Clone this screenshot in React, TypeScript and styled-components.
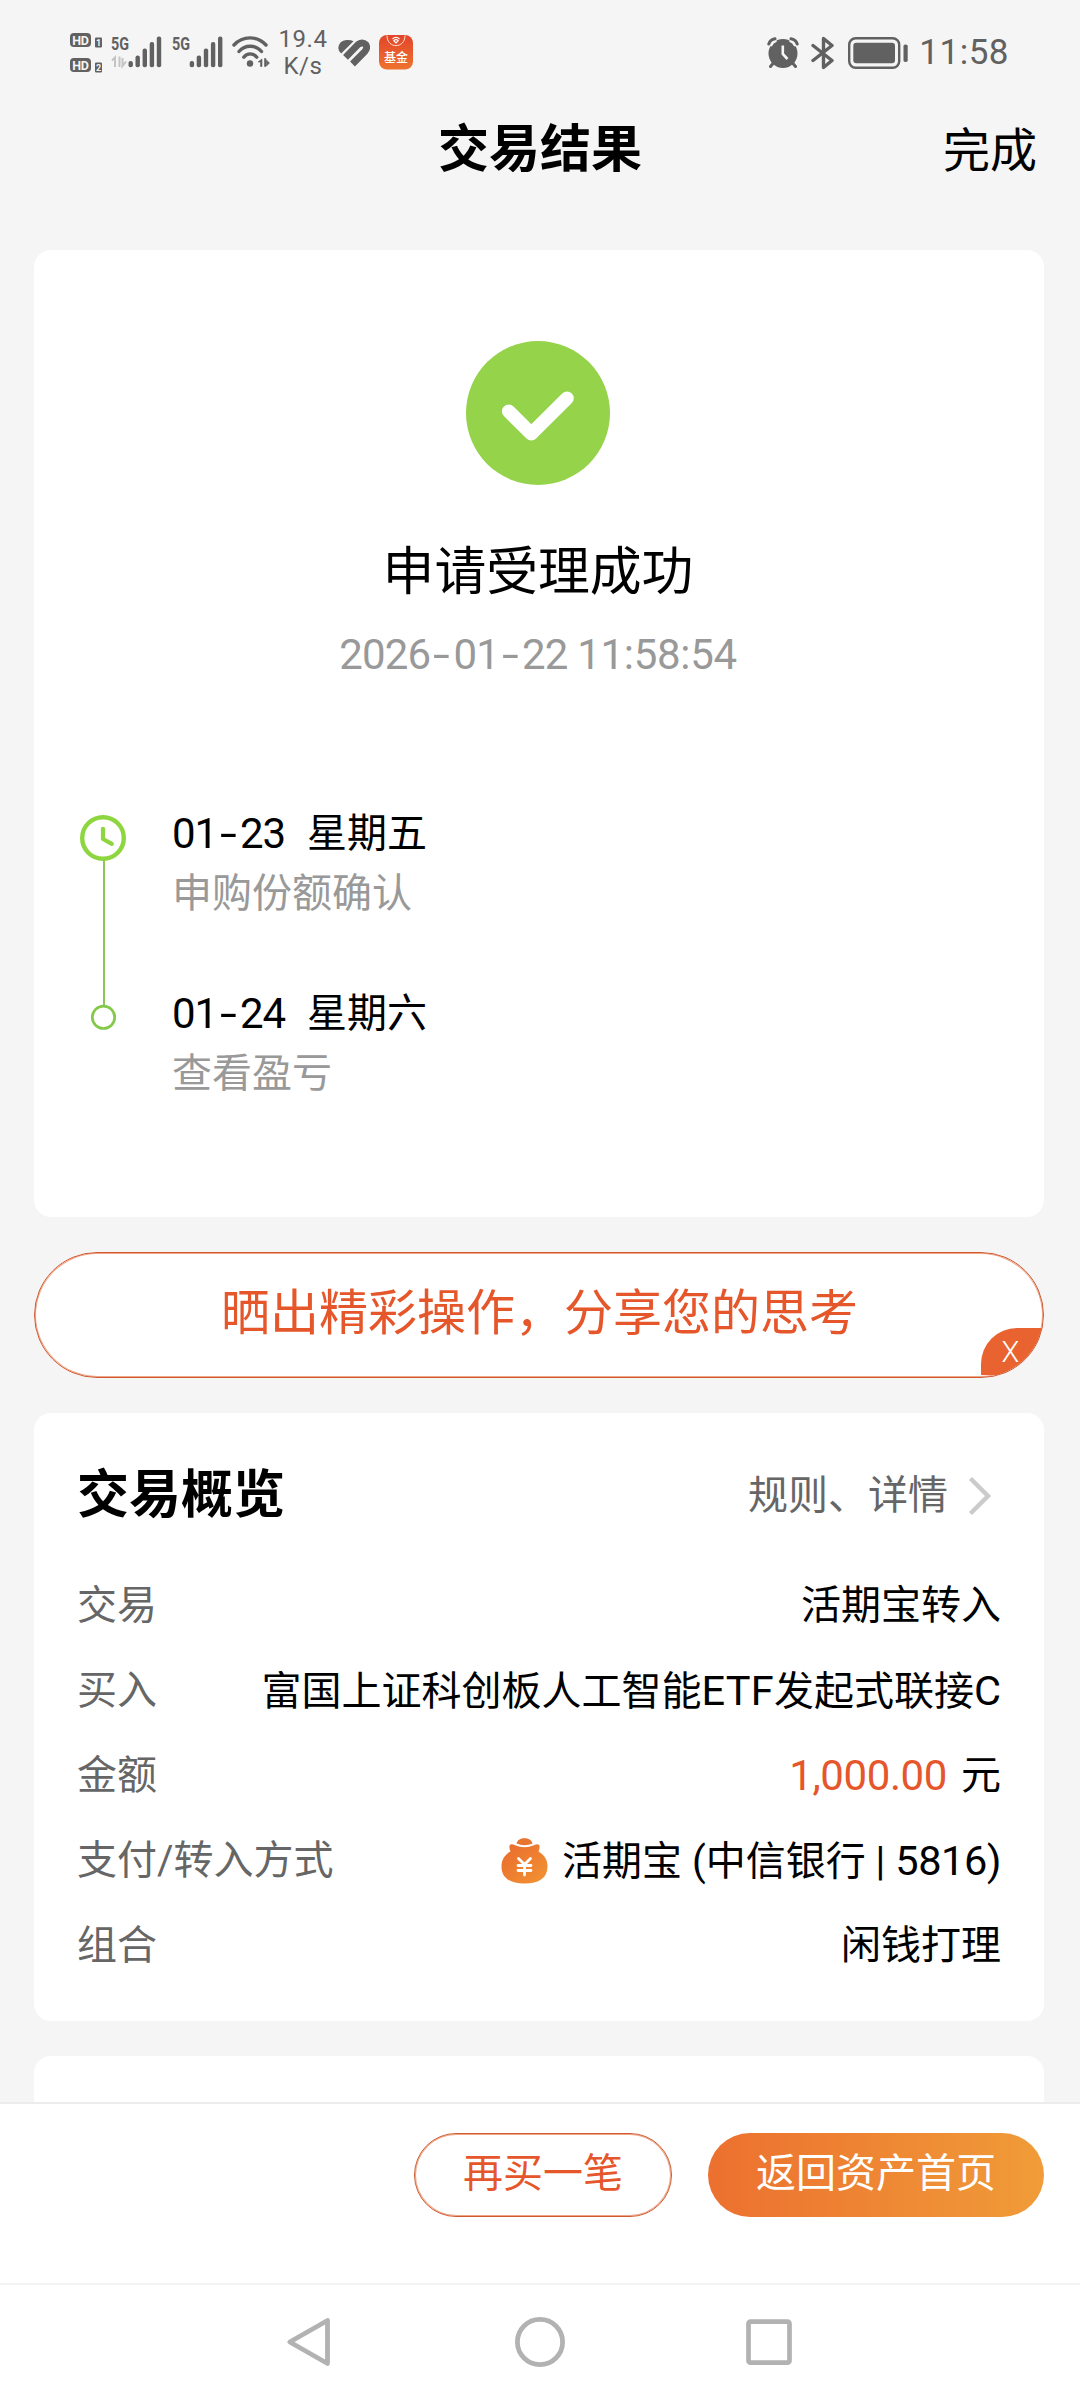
import React from "react";
import styled, { createGlobalStyle } from "styled-components";

const GlobalStyle = createGlobalStyle`
  *, *::before, *::after { box-sizing: border-box; }
  body {
    margin: 0;
    background: #f5f5f5;
    font-family: Roboto, "Noto Sans CJK SC", sans-serif;
    color: #000;
  }
  svg { display: block; flex: none; }
`;

const Screen = styled.div`
  width: 1080px;
  height: 2400px;
  display: flex;
  flex-direction: column;
  overflow: hidden;
  background: #f5f5f5;
`;

/* ---------- status bar ---------- */

const StatusBar = styled.header`
  height: 104px;
  flex: none;
  padding: 0 71px 0 70px;
  display: flex;
  align-items: center;
  justify-content: space-between;
  color: #616161;
`;

const StatusGroup = styled.div`
  display: flex;
  align-items: center;
  height: 104px;
  padding-top: 1px;
`;

const NetSpeed = styled.div`
  width: 48px;
  margin: 0 11px 0 8px;
  display: flex;
  flex-direction: column;
  align-items: center;
  font-size: 24px;
  line-height: 27px;
  letter-spacing: 0.5px;
  white-space: nowrap;
`;

const Clock = styled.time`
  margin-left: 11px;
  font-size: 35px;
  line-height: 40px;
  letter-spacing: 0.5px;
`;

/* ---------- title bar ---------- */

const TitleBar = styled.div`
  height: 146px;
  flex: none;
  padding: 0 43px 54px;
  display: grid;
  grid-template-columns: 1fr auto 1fr;
  align-items: center;
`;

const PageTitle = styled.h1`
  grid-column: 2;
  margin: 0;
  font-size: 51px;
  line-height: 60px;
  font-weight: 700;
`;

const DoneButton = styled.button`
  justify-self: end;
  padding: 2px 0 0;
  border: 0;
  background: none;
  color: inherit;
  font: inherit;
  font-size: 47px;
  line-height: 60px;
`;

/* ---------- content ---------- */

const Content = styled.main`
  flex: none;
  height: 1852px;
  padding: 0 36px 0 34px;
  display: flex;
  flex-direction: column;
  gap: 35px;
  overflow: hidden;
`;

const Card = styled.section<{ $height: number }>`
  height: ${(p) => p.$height}px;
  flex: none;
  border-radius: 17px;
  background: #fff;
`;

const ResultHead = styled.div`
  padding: 91px 2px 0 0;
  display: flex;
  flex-direction: column;
  align-items: center;
`;

const ResultTitle = styled.h2`
  margin: 53px 0 0;
  font-size: 51.8px;
  line-height: 70px;
  font-weight: 400;
`;

const ResultTime = styled.p`
  margin: 22px 0 0;
  font-size: 42px;
  line-height: 50px;
  letter-spacing: -0.8px;
  color: #999;
  white-space: nowrap;
`;

const TimeOfDay = styled.span`
  letter-spacing: -0.3px;
`;

const DashBox = styled.span`
  display: inline-block;
  width: 23px;
  text-align: center;
  letter-spacing: 0;
  transform: scaleX(1.45);
`;

const Timeline = styled.div`
  display: flex;
  margin-top: 124px;
  padding-left: 45px;
  gap: 43px;
`;

const Steps = styled.ol`
  list-style: none;
  margin: 0;
  padding: 0;
`;

const Step = styled.li`
  height: 180px;
`;

const StepDate = styled.div`
  display: flex;
  gap: 22px;
  font-size: 40px;
  line-height: 60px;
`;

const StepDay = styled.span`
  width: 113px;
  font-size: 42px;
  letter-spacing: -1.1px;
  white-space: nowrap;
`;

const StepNote = styled.div`
  font-size: 40px;
  line-height: 60px;
  color: #999;
`;

const ShareBanner = styled.div`
  position: relative;
  height: 126px;
  flex: none;
  overflow: hidden;
  display: flex;
  justify-content: center;
  padding: 27px 0 0 1px;
  border: 1px solid #cf5a30;
  box-shadow: inset 0 0 0 1px #f0a587;
  border-radius: 63px;
  background: #fff;
  color: #e6562b;
  font-size: 49px;
  line-height: 68px;
`;

const CloseCorner = styled.button`
  position: absolute;
  right: 1px;
  bottom: 2px;
  width: 61px;
  height: 47px;
  padding: 0 2px 0 0;
  border: 0;
  border-radius: 36px 0 0 0;
  background: #e8632f;
  color: #fff;
  font: 300 29px/46px Roboto, sans-serif;
`;

const OverviewHead = styled.div`
  height: 151px;
  padding: 27px 52px 13px 43px;
  display: flex;
  align-items: center;
  justify-content: space-between;
`;

const OverviewTitle = styled.h2`
  margin: 0;
  font-size: 52px;
  line-height: 60px;
  font-weight: 700;
`;

const DetailLink = styled.a`
  display: flex;
  align-items: center;
  gap: 20px;
  font-size: 40px;
  line-height: 60px;
  color: #666;
`;

const Row = styled.div`
  height: 85px;
  padding: 0 43px 1px;
  display: flex;
  align-items: center;
  justify-content: space-between;
  font-size: 40px;
  line-height: 60px;
`;

const Label = styled.span`
  color: #666;
`;

const Value = styled.span`
  display: flex;
  align-items: center;
  gap: 14px;
  white-space: pre;
`;

const Latin = styled.span<{ $spacing?: number }>`
  font-size: 41.5px;
  letter-spacing: ${(p) => p.$spacing ?? 0}px;
`;

const Amount = styled.span`
  font-size: 42px;
  letter-spacing: -0.4px;
  color: #e6562b;
`;

/* ---------- bottom bars ---------- */

const ActionBar = styled.footer`
  height: 181px;
  flex: none;
  padding: 29px 36px 0;
  display: flex;
  justify-content: flex-end;
  align-items: flex-start;
  gap: 36px;
  border-top: 2px solid #ececec;
  background: #fff;
`;

const ActionButton = styled.button<{ $primary?: boolean; $width: number }>`
  width: ${(p) => p.$width}px;
  height: 84px;
  padding: 0 0 2px;
  border: ${(p) => (p.$primary ? "0" : "1px solid #cf5a30")};
  box-shadow: ${(p) => (p.$primary ? "none" : "inset 0 0 0 1px #f0a587")};
  border-radius: 42px;
  background: ${(p) => (p.$primary ? "linear-gradient(90deg, #ec702f, #f09c38)" : "#fff")};
  color: ${(p) => (p.$primary ? "#fff" : "#e6562b")};
  font: inherit;
  font-size: 40px;
  line-height: 60px;
`;

const NavBar = styled.nav`
  height: 117px;
  flex: none;
  padding: 0 287px 2px 285px;
  display: flex;
  align-items: center;
  justify-content: space-between;
  border-top: 2px solid #f3f3f3;
  background: #fff;
`;

/* ---------- drawings ---------- */

const SignalIcons = () => (
  <svg width="201" height="50" viewBox="70 28 201 50">
    <rect x="70" y="33" width="21" height="14" rx="4" fill="#616161" />
    <rect x="70" y="58" width="21" height="14" rx="4" fill="#616161" />
    <g fill="#f5f5f5" fontFamily="Roboto, sans-serif" fontWeight="700">
      <text x="72.3" y="44.6" fontSize="12.5" textLength="16.5">HD</text>
      <text x="72.3" y="69.6" fontSize="12.5" textLength="16.5">HD</text>
    </g>
    <rect x="95" y="37.5" width="7" height="10" rx="1" fill="#616161" />
    <rect x="95" y="62.5" width="7" height="10" rx="1" fill="#616161" />
    <g fill="#f5f5f5" fontFamily="Roboto, sans-serif" fontWeight="700" fontSize="9">
      <text x="96" y="45.8">1</text>
      <text x="96" y="70.8">2</text>
    </g>
    <g fill="#616161" fontFamily="Roboto, sans-serif" fontWeight="700" fontSize="18.5">
      <text x="111" y="50" textLength="18" lengthAdjust="spacingAndGlyphs">5G</text>
      <text x="172" y="50" textLength="18" lengthAdjust="spacingAndGlyphs">5G</text>
    </g>
    <path d="M112 60.5 115 57.5V67M119.5 56.5V67M122.5 58V66L126 61.5" fill="none" stroke="#c4c4c4" strokeWidth="2" />
    {[128.5, 189.7].map((x) => (
      <g key={x} fill="#616161">
        <rect x={x} y="61" width="4.4" height="6.3" rx="2" />
        <rect x={x + 7} y="55.5" width="4.4" height="11.8" rx="2" />
        <rect x={x + 14.1} y="48.5" width="4.4" height="18.8" rx="2" />
        <rect x={x + 21.2} y="42" width="4.4" height="25.3" rx="2" />
        <rect x={x + 28.3} y="36.5" width="4.4" height="30.8" rx="2" />
      </g>
    ))}
    <g fill="none" stroke="#616161" strokeWidth="3.4" strokeLinecap="round">
      <path d="M234 45C242.5 35.5 257.5 35.5 266 45" />
      <path d="M239 51.5C245 44.5 255.5 44.5 261.5 51.5" />
      <path d="M243.8 57.2C247 52.8 253.5 52.8 256.8 57.2" />
    </g>
    <circle cx="250" cy="63.5" r="3.2" fill="#616161" />
    <path d="M258 62 262 59V66.5H260.5V62ZM264.5 58.5H266V66.5H264.5ZM266.5 60 269.5 63 266.5 66Z" fill="#616161" stroke="#616161" strokeWidth=".6" />
  </svg>
);

const HealthIcon = () => (
  <svg width="32" height="28" viewBox="337 38 32 28">
    <path d="M340.2 52.4Q337.3 50 337.3 47Q338 39.7 345.5 39Q350 38.8 352.5 40.2Z" fill="#616161" />
    <path d="M344.5 56.3 357 43.6Q361.5 40.3 364.7 43.4Q367 47 363.7 50.7L351.5 63" fill="none" stroke="#616161" strokeWidth="6.8" />
  </svg>
);

const FundIcon = () => (
  <svg width="34" height="35" viewBox="0 0 34 35">
    <defs>
      <linearGradient id="fund" x1="0" y1="0" x2="0" y2="1">
        <stop offset="0" stopColor="#e2452a" />
        <stop offset="1" stopColor="#ee732e" />
      </linearGradient>
    </defs>
    <rect width="34" height="34.5" rx="8" fill="url(#fund)" />
    <path d="M8 .5C8 14 26 14 26 .5" fill="none" stroke="#ffe3cf" strokeWidth="1" />
    <path d="M13.5 4Q17 .8 20.5 4M14.8 5.7Q17 3.6 19.2 5.7L17 8Z" fill="none" stroke="#fff" strokeWidth="1.1" />
    <text x="5" y="26.5" fontSize="12" fontWeight="500" fill="#fff" fontFamily="Noto Sans CJK SC, sans-serif">基金</text>
  </svg>
);

const AlarmIcon = () => (
  <svg width="32" height="32" viewBox="0 0 32 32">
    <circle cx="16" cy="16.5" r="14.5" fill="#616161" />
    <path d="M2.5 8.5Q4.5 4 9 2.5M29.5 8.5Q27.5 4 23 2.5" fill="none" stroke="#f5f5f5" strokeWidth="5" />
    <path d="M1.8 7Q3.3 2.5 8 1.8M30.2 7Q28.7 2.5 24 1.8M6 26.5 3.5 29.5M26 26.5 28.5 29.5" fill="none" stroke="#616161" strokeWidth="3" strokeLinecap="round" />
    <path d="M15.8 8.5V17L20.5 22" fill="none" stroke="#f5f5f5" strokeWidth="2.6" />
  </svg>
);

const BluetoothIcon = () => (
  <svg width="24" height="34" viewBox="0 0 24 34">
    <path d="M2 9.5 21 24.5 12.5 31.5V2.5L21 9.5 2 24.5" fill="none" stroke="#616161" strokeWidth="3.4" strokeLinejoin="round" strokeLinecap="round" />
  </svg>
);

const BatteryIcon = () => (
  <svg width="60" height="32" viewBox="0 0 60 32">
    <rect x="1.2" y="1.2" width="50" height="29.6" rx="6.5" fill="none" stroke="#616161" strokeWidth="2.4" />
    <rect x="5.3" y="5.7" width="41.7" height="20.6" rx="3" fill="#616161" />
    <rect x="55.5" y="7.5" width="4.2" height="17.5" rx="1.8" fill="#616161" />
  </svg>
);

const SuccessIcon = () => (
  <svg width="144" height="144" viewBox="0 0 144 144">
    <circle cx="72" cy="72" r="72" fill="#94d34a" />
    <path d="M42.7 70.3 65.3 92.8 101 57.2" fill="none" stroke="#fff" strokeWidth="13.6" strokeLinecap="round" strokeLinejoin="round" />
  </svg>
);

const RailBox = styled.div`
  padding-top: 10px;
`;

const TimelineRail = () => (
  <svg width="50" height="220" viewBox="0 0 50 220">
    <path d="M25 46V191" stroke="#8cc653" strokeWidth="2" />
    <circle cx="24" cy="24" r="20.8" fill="#fff" stroke="#8ed63f" strokeWidth="4.4" />
    <path d="M24 14.8V25L32.8 29.8" fill="none" stroke="#8ed63f" strokeWidth="4.2" strokeLinecap="round" strokeLinejoin="round" />
    <circle cx="24.5" cy="203.3" r="11.2" fill="#fff" stroke="#84c94a" strokeWidth="2.7" />
  </svg>
);

const ChevronIcon = () => (
  <svg width="24" height="40" viewBox="0 0 24 40">
    <path d="M2.5 2.5 20 20 2.5 37.5" fill="none" stroke="#cbcbcb" strokeWidth="4.4" />
  </svg>
);

const MoneyBagIcon = () => (
  <svg width="47" height="46" viewBox="0 0 47 46">
    <defs>
      <linearGradient id="bag" x1="0" y1="0" x2="1" y2="1">
        <stop offset="0" stopColor="#e96a2e" />
        <stop offset="1" stopColor="#f29433" />
      </linearGradient>
    </defs>
    <path d="M15.5 5.5C17 -1.5 30 -1.5 31.5 5.5Q23.5 8.8 15.5 5.5Z" fill="#e9742f" />
    <path d="M9 6.8Q11 5.5 14 7.3Q23.5 11 33 7.3Q36 5.5 38 6.8Q39.5 9 37.5 13.5C43.5 17 46.5 22 46.5 28.5C46.5 40 38 45.5 23.5 45.5S.5 40 .5 28.5C.5 22 3.5 17 9.5 13.5Q7.5 9 9 6.8Z" fill="url(#bag)" />
    <path d="M17.5 20.5 23.5 26.5 29.5 20.5M23.5 26.5V37M17 27.5H30M17 32.5H30" fill="none" stroke="#fff" strokeWidth="2.8" strokeLinecap="round" />
  </svg>
);

const BackIcon = () => (
  <svg width="49" height="52" viewBox="0 0 49 52">
    <path d="M42.5 4.5V47.5L4.8 26Z" fill="none" stroke="#b2b2b2" strokeWidth="4.8" strokeLinejoin="round" />
  </svg>
);

const HomeIcon = () => (
  <svg width="50" height="50" viewBox="0 0 50 50">
    <circle cx="25" cy="25" r="22.6" fill="none" stroke="#b2b2b2" strokeWidth="4.8" />
  </svg>
);

const RecentsIcon = () => (
  <svg width="47" height="46" viewBox="0 0 47 46">
    <rect x="2.5" y="2.7" width="41" height="41" rx="2" fill="none" stroke="#b2b2b2" strokeWidth="4.7" />
  </svg>
);

const Spacer = styled.span<{ $w: number }>`
  width: ${(p) => p.$w}px;
  flex: none;
`;

const Dash = () => <DashBox>-</DashBox>;

const steps = [
  { month: "01", day: "23", week: "星期五", note: "申购份额确认" },
  { month: "01", day: "24", week: "星期六", note: "查看盈亏" },
];

const rows: { label: string; value: React.ReactNode }[] = [
  { label: "交易", value: "活期宝转入" },
  {
    label: "买入",
    value: (
      <span>
        富国上证科创板人工智能<Latin $spacing={0.3}>ETF</Latin>发起式联接<Latin>C</Latin>
      </span>
    ),
  },
  { label: "金额", value: <><Amount>1,000.00</Amount><span>元</span></> },
  {
    label: "支付/转入方式",
    value: (
      <>
        <MoneyBagIcon />
        <span>活期宝 (中信银行 | <Latin $spacing={-0.4}>5816)</Latin></span>
      </>
    ),
  },
  { label: "组合", value: "闲钱打理" },
];

export default function App() {
  return (
    <Screen>
      <GlobalStyle />
      <StatusBar>
        <StatusGroup>
          <SignalIcons />
          <NetSpeed>
            <span>19.4</span>
            <span>K/s</span>
          </NetSpeed>
          <HealthIcon />
          <Spacer $w={9} />
          <FundIcon />
        </StatusGroup>
        <StatusGroup>
          <AlarmIcon />
          <Spacer $w={12} />
          <BluetoothIcon />
          <Spacer $w={13} />
          <BatteryIcon />
          <Clock>11:58</Clock>
        </StatusGroup>
      </StatusBar>

      <TitleBar>
        <PageTitle>交易结果</PageTitle>
        <DoneButton>完成</DoneButton>
      </TitleBar>

      <Content>
        <Card $height={967}>
          <ResultHead>
            <SuccessIcon />
            <ResultTitle>申请受理成功</ResultTitle>
            <ResultTime>
              2026<Dash />01<Dash />22 <TimeOfDay>11:58:54</TimeOfDay>
            </ResultTime>
          </ResultHead>
          <Timeline>
            <RailBox>
              <TimelineRail />
            </RailBox>
            <Steps>
              {steps.map((s) => (
                <Step key={s.day}>
                  <StepDate>
                    <StepDay>{s.month}<Dash />{s.day}</StepDay>
                    <span>{s.week}</span>
                  </StepDate>
                  <StepNote>{s.note}</StepNote>
                </Step>
              ))}
            </Steps>
          </Timeline>
        </Card>

        <ShareBanner>
          晒出精彩操作，分享您的思考
          <CloseCorner>X</CloseCorner>
        </ShareBanner>

        <Card $height={608}>
          <OverviewHead>
            <OverviewTitle>交易概览</OverviewTitle>
            <DetailLink>
              规则、详情
              <ChevronIcon />
            </DetailLink>
          </OverviewHead>
          {rows.map((r) => (
            <Row key={r.label}>
              <Label>{r.label}</Label>
              <Value>{r.value}</Value>
            </Row>
          ))}
        </Card>

        <Card $height={120} />
      </Content>

      <ActionBar>
        <ActionButton $width={258}>再买一笔</ActionButton>
        <ActionButton $primary $width={336}>返回资产首页</ActionButton>
      </ActionBar>

      <NavBar>
        <BackIcon />
        <HomeIcon />
        <RecentsIcon />
      </NavBar>
    </Screen>
  );
}
